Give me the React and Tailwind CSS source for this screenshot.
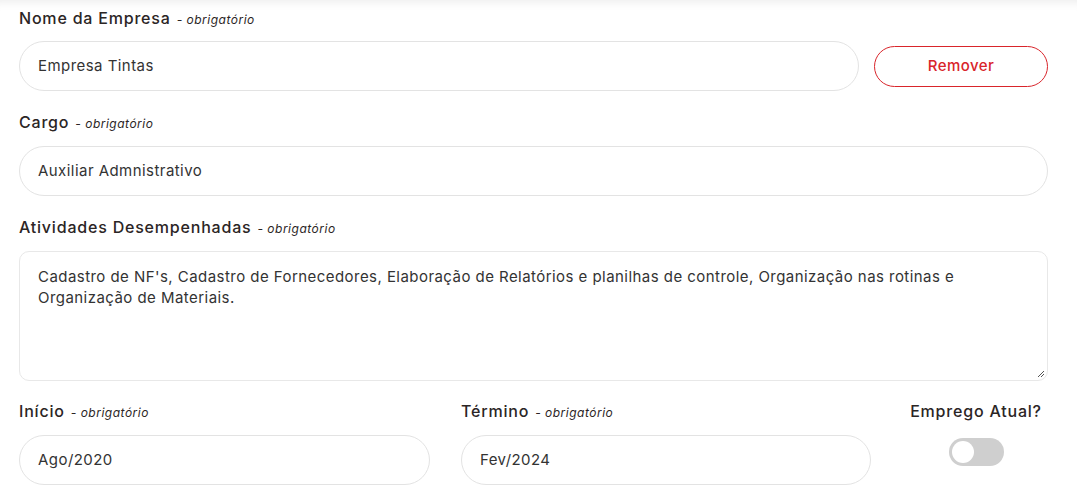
import React from "react";

const font = { fontFamily: "Inter, 'Open Sans', sans-serif" };

function Label({ children, className = "" }) {
  return (
    <div className={"flex items-baseline gap-[6px] text-[16px] font-medium tracking-[0.8px] text-[#2b2525] leading-[20px] " + className}>
      <span>{children}</span>
      <span className="text-[12px] italic font-normal tracking-[0.5px] text-[#2b2525]">- obrigatório</span>
    </div>
  );
}

function Field({ value, className = "" }) {
  return (
    <div className={"h-[50px] rounded-full border border-[#e3e3e3] bg-white flex items-center pl-[18px] text-[15px] tracking-[0.45px] text-[#333] " + className}>
      {value}
    </div>
  );
}

export default function App() {
  return (
    <div className="w-[1077px] h-[495px] bg-white overflow-hidden" style={font}>
      <div className="h-full px-[19px] pt-[8px] shadow-[inset_0_10px_10px_-8px_rgba(0,0,0,0.08)] pr-[29px]">
        <Label>Nome da Empresa</Label>
        <div className="flex items-center gap-[15px] mt-[11px]">
          <Field value="Empresa Tintas" className="flex-1" />
          <button className="w-[174px] h-[41px] rounded-full border border-[#d9252b] text-[#d9252b] text-[15px] tracking-[0.45px] font-medium">
            Remover
          </button>
        </div>

        <Label className="mt-[21px]">Cargo</Label>
        <Field value="Auxiliar Admnistrativo" className="mt-[12px]" />

        <Label className="mt-[21px]">Atividades Desempenhadas</Label>
        <div className="relative mt-[12px] h-[130px] rounded-[10px] border border-[#e8e8e8] bg-white px-[18px] pt-[14px] pr-[50px] text-[15px] tracking-[0.45px] leading-[21px] text-[#333]">
          Cadastro de NF's, Cadastro de Fornecedores, Elaboração de Relatórios e planilhas de controle, Organização nas rotinas e Organização de Materiais.
          <svg className="absolute right-[2px] bottom-[2px]" width="9" height="9" viewBox="0 0 9 9">
            <path d="M8 2 L2 8 M8 5 L5 8" stroke="#555" strokeWidth="1" />
          </svg>
        </div>

        <div className="flex mt-[20px]">
          <div className="w-[411px]">
            <Label>Início</Label>
            <Field value="Ago/2020" className="mt-[12px]" />
          </div>
          <div className="w-[410px] ml-[31px]">
            <Label>Término</Label>
            <Field value="Fev/2024" className="mt-[12px]" />
          </div>
          <div className="flex-1 ml-[33px] flex flex-col items-center">
            <div className="text-[16px] font-medium tracking-[0.8px] text-[#2b2525] leading-[20px]">Emprego Atual?</div>
            <div className="mt-[17px] w-[55px] h-[28px] rounded-full bg-[#cfcfcf] relative">
              <div className="absolute left-[3px] top-[3px] w-[22px] h-[22px] rounded-full bg-white" />
            </div>
          </div>
        </div>
      </div>
    </div>
  );
}
